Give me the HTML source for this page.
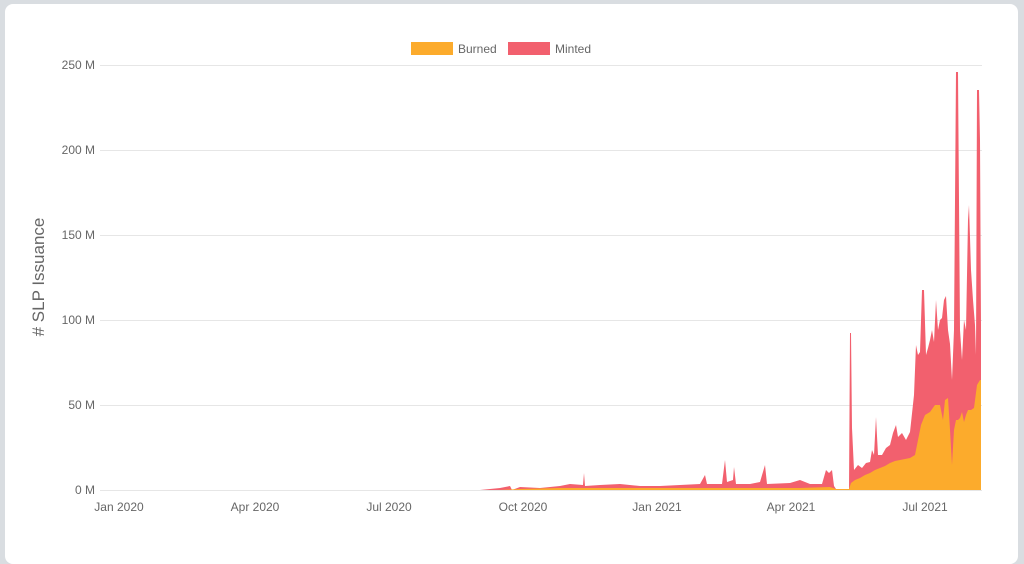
<!DOCTYPE html>
<html><head><meta charset="utf-8"><style>
html,body{margin:0;padding:0;width:1024px;height:562px;background:#d9dde1;overflow:hidden}
.card{position:absolute;left:5px;top:4px;width:1013px;height:560px;background:#fff;border-radius:8px}
svg{position:absolute;left:0;top:0}
text{font-family:"Liberation Sans",sans-serif;fill:#666}
</style></head><body>
<div class="card"></div>
<svg width="1024" height="562" viewBox="0 0 1024 562">
<g stroke="#e6e6e6" stroke-width="1">
<line x1="100" y1="65.5" x2="982" y2="65.5"/>
<line x1="100" y1="150.5" x2="982" y2="150.5"/>
<line x1="100" y1="235.5" x2="982" y2="235.5"/>
<line x1="100" y1="320.5" x2="982" y2="320.5"/>
<line x1="100" y1="405.5" x2="982" y2="405.5"/>
<line x1="100" y1="490.5" x2="982" y2="490.5"/>
</g>
<g font-size="12" text-anchor="end">
<text x="95" y="69">250 M</text>
<text x="95" y="154">200 M</text>
<text x="95" y="239">150 M</text>
<text x="95" y="324">100 M</text>
<text x="95" y="409">50 M</text>
<text x="95" y="494">0 M</text>
</g>
<g font-size="12" text-anchor="middle">
<text x="119" y="511">Jan 2020</text>
<text x="255" y="511">Apr 2020</text>
<text x="389" y="511">Jul 2020</text>
<text x="523" y="511">Oct 2020</text>
<text x="657" y="511">Jan 2021</text>
<text x="791" y="511">Apr 2021</text>
<text x="925" y="511">Jul 2021</text>
</g>
<text x="0" y="0" font-size="17" text-anchor="middle" transform="translate(44,277) rotate(-90)">#  SLP Issuance</text>
<rect x="411" y="42" width="42" height="13" fill="#fcab2c"/>
<text x="458" y="53" font-size="12">Burned</text>
<rect x="508" y="42" width="42" height="13" fill="#f2606e"/>
<text x="555" y="53" font-size="12">Minted</text>
<polygon fill="#f2606e" points="100,490 480,490 500,488 510,486 512,490 520,487 540,488 560,486 570,484 583,485 584,473 585,486 600,485 620,484 640,486 660,486 680,485 700,484 705,475 707,484 722,484 725,460 727,482 733,480 734,467 736,484 750,484 760,482 765,465 767,484 790,483 800,480 810,484 822,484 826,470 829,473 832,470 834,486 836,489 849,489 850,333 851,333 852,428 854,470 858,465 862,468 866,463 870,462 872,450 874,455 876,417 878,455 882,455 886,448 890,445 893,433 896,425 898,437 902,433 906,440 910,432 914,395 916,345 918,355 920,352 922,290 924,290 926,355 928,348 930,340 932,330 934,342 936,300 938,330 940,320 942,318 944,300 946,296 948,330 950,344 952,380 954,330 956,72 958,72 960,330 962,360 964,320 966,330 968,220 969,205 971,270 973,300 975,325 976,355 977,90 979,90 980,140 981,325 981,490"/>
<polygon fill="#fcab2c" points="100,490 500,490 520,489 560,488 600,488 640,488 700,488 760,488 800,488 830,487 836,489 849,489 851,483 855,480 860,478 865,475 870,473 875,470 880,468 885,466 890,463 895,461 900,460 905,459 910,458 915,455 918,440 921,425 925,415 930,412 935,405 940,405 943,420 945,400 948,398 950,430 952,465 954,430 956,420 958,420 960,418 962,412 964,422 966,415 968,410 971,410 974,408 977,385 980,380 981,380 981,490"/>
</svg>
</body></html>
